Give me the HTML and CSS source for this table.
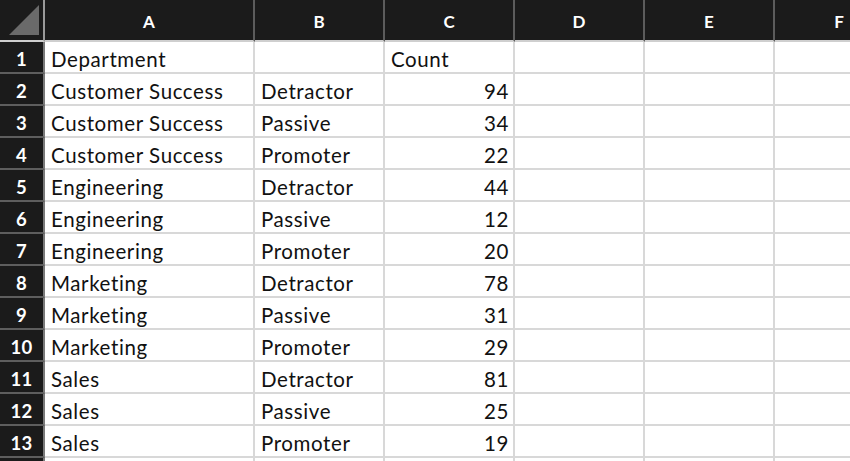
FILE: index.html
```html
<!DOCTYPE html>
<html>
<head>
<meta charset="utf-8">
<link rel="stylesheet" href="styles.css">
</head>
<body>
<div class="sheet">
  <div class="corner"><span class="tri"></span></div>
  <div class="colhead">A</div>
  <div class="colhead">B</div>
  <div class="colhead">C</div>
  <div class="colhead">D</div>
  <div class="colhead">E</div>
  <div class="colhead">F</div>

  <div class="rowhead">1</div><div class="cell">Department</div><div class="cell"></div><div class="cell">Count</div><div class="cell"></div><div class="cell"></div><div class="cell"></div>
  <div class="rowhead">2</div><div class="cell">Customer Success</div><div class="cell">Detractor</div><div class="cell num">94</div><div class="cell"></div><div class="cell"></div><div class="cell"></div>
  <div class="rowhead">3</div><div class="cell">Customer Success</div><div class="cell">Passive</div><div class="cell num">34</div><div class="cell"></div><div class="cell"></div><div class="cell"></div>
  <div class="rowhead">4</div><div class="cell">Customer Success</div><div class="cell">Promoter</div><div class="cell num">22</div><div class="cell"></div><div class="cell"></div><div class="cell"></div>
  <div class="rowhead">5</div><div class="cell">Engineering</div><div class="cell">Detractor</div><div class="cell num">44</div><div class="cell"></div><div class="cell"></div><div class="cell"></div>
  <div class="rowhead">6</div><div class="cell">Engineering</div><div class="cell">Passive</div><div class="cell num">12</div><div class="cell"></div><div class="cell"></div><div class="cell"></div>
  <div class="rowhead">7</div><div class="cell">Engineering</div><div class="cell">Promoter</div><div class="cell num">20</div><div class="cell"></div><div class="cell"></div><div class="cell"></div>
  <div class="rowhead">8</div><div class="cell">Marketing</div><div class="cell">Detractor</div><div class="cell num">78</div><div class="cell"></div><div class="cell"></div><div class="cell"></div>
  <div class="rowhead">9</div><div class="cell">Marketing</div><div class="cell">Passive</div><div class="cell num">31</div><div class="cell"></div><div class="cell"></div><div class="cell"></div>
  <div class="rowhead">10</div><div class="cell">Marketing</div><div class="cell">Promoter</div><div class="cell num">29</div><div class="cell"></div><div class="cell"></div><div class="cell"></div>
  <div class="rowhead">11</div><div class="cell">Sales</div><div class="cell">Detractor</div><div class="cell num">81</div><div class="cell"></div><div class="cell"></div><div class="cell"></div>
  <div class="rowhead">12</div><div class="cell">Sales</div><div class="cell">Passive</div><div class="cell num">25</div><div class="cell"></div><div class="cell"></div><div class="cell"></div>
  <div class="rowhead">13</div><div class="cell">Sales</div><div class="cell">Promoter</div><div class="cell num">19</div><div class="cell"></div><div class="cell"></div><div class="cell"></div>
  <div class="rowhead"></div><div class="cell"></div><div class="cell"></div><div class="cell"></div><div class="cell"></div><div class="cell"></div><div class="cell"></div>
</div>
</body>
</html>
```
FILE: styles.css
```css
html, body {
  margin: 0;
  padding: 0;
  background: #ffffff;
  overflow: hidden;
  height: 461px;
}

.sheet {
  display: grid;
  grid-template-columns: 45px 210px 130px 130px 130px 130px 130px;
  grid-template-rows: 42px repeat(14, 32px);
  font-family: Lato, "Open Sans", sans-serif;
  font-size: 20.5px;
  letter-spacing: 0.6px;
  color: #111111;
  width: 905px;
}

.corner {
  background: #1b1b1b;
  border-right: 2px solid #9a9a9a;
  border-bottom: 2px solid #cfcfcf;
  box-sizing: border-box;
  display: flex;
  align-items: flex-end;
  justify-content: flex-end;
  padding: 0 4px 5px 0;
}

.tri {
  display: block;
  width: 30px;
  height: 30px;
  background: #6a6a6a;
  clip-path: polygon(100% 0, 100% 100%, 0 100%);
}

.colhead {
  background: #1b1b1b;
  color: #ffffff;
  font-weight: 700;
  font-size: 17px;
  letter-spacing: 0;
  display: flex;
  align-items: center;
  justify-content: center;
  padding-top: 3px;
  border-right: 2px solid #5c5c5c;
  border-bottom: 2px solid #cfcfcf;
  box-sizing: border-box;
}

.rowhead {
  background: #1b1b1b;
  color: #ffffff;
  font-weight: 700;
  font-size: 18.5px;
  letter-spacing: 0.3px;
  display: flex;
  align-items: center;
  justify-content: center;
  padding-top: 4px;
  border-right: 2px solid #7a7a7a;
  border-bottom: 2px solid #5e5e5e;
  box-sizing: border-box;
}

.cell {
  display: flex;
  align-items: center;
  padding: 4px 4px 0 6px;
  border-right: 2px solid #d8d8d8;
  border-bottom: 2px solid #d8d8d8;
  box-sizing: border-box;
  white-space: nowrap;
  overflow: hidden;
}

.num {
  justify-content: flex-end;
}
```
